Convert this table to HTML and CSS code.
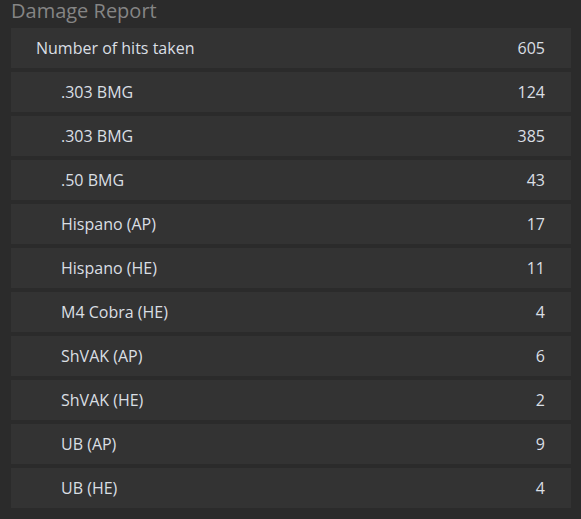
FILE: index.html
```html
<!DOCTYPE html>
<html>
<head>
<meta charset="utf-8">
<link rel="stylesheet" href="styles.css">
</head>
<body>
<div class="report">
  <h2 class="title">Damage Report</h2>
  <div class="rows">
    <div class="row"><span class="label">Number of hits taken</span><span class="val">605</span></div>
    <div class="row sub"><span class="label">.303 BMG</span><span class="val">124</span></div>
    <div class="row sub"><span class="label">.303 BMG</span><span class="val">385</span></div>
    <div class="row sub"><span class="label">.50 BMG</span><span class="val">43</span></div>
    <div class="row sub"><span class="label">Hispano (AP)</span><span class="val">17</span></div>
    <div class="row sub"><span class="label">Hispano (HE)</span><span class="val">11</span></div>
    <div class="row sub"><span class="label">M4 Cobra (HE)</span><span class="val">4</span></div>
    <div class="row sub"><span class="label">ShVAK (AP)</span><span class="val">6</span></div>
    <div class="row sub"><span class="label">ShVAK (HE)</span><span class="val">2</span></div>
    <div class="row sub"><span class="label">UB (AP)</span><span class="val">9</span></div>
    <div class="row sub"><span class="label">UB (HE)</span><span class="val">4</span></div>
  </div>
</div>
</body>
</html>
```
FILE: styles.css
```css
html, body {
  margin: 0;
  padding: 0;
  background: #2b2b2b;
  font-family: "Open Sans", "DejaVu Sans", sans-serif;
}
.report {
  padding: 0 10px 0 11px;
}
.title {
  margin: 0 0 7px;
  height: 21px;
  font-size: 20px;
  font-weight: 400;
  line-height: 21px;
  color: #858585;
}
.rows {
  display: flex;
  flex-direction: column;
  gap: 4px;
}
.row {
  height: 40px;
  background: #333333;
  display: flex;
  align-items: center;
  justify-content: space-between;
  padding: 0 26px 0 25px;
  font-size: 16px;
  color: #dadfe4;
}
.row.sub {
  padding-left: 50px;
}
```
